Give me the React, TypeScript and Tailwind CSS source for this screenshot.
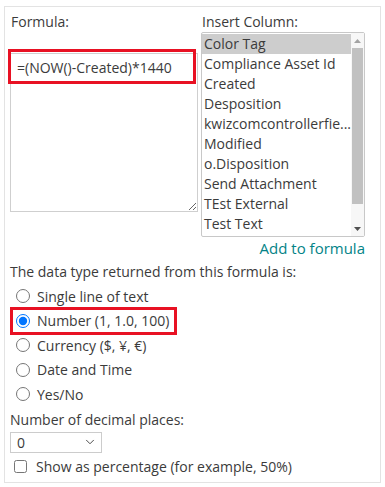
import { ChevronDown } from "lucide-react";

const columns = [
  "Color Tag",
  "Compliance Asset Id",
  "Created",
  "Desposition",
  "kwizcomcontrollerfie...",
  "Modified",
  "o.Disposition",
  "Send Attachment",
  "TEst External",
  "Test Text",
];

const types = [
  "Single line of text",
  "Number (1, 1.0, 100)",
  "Currency ($, ¥, €)",
  "Date and Time",
  "Yes/No",
];

const App = () => {
  return (
    <div className="w-[385px] h-[487px] bg-white pt-[6px] pl-[4px] font-['Open_Sans',sans-serif] text-[14px] text-[#3b3b3b]">
      <div className="relative w-[377px] h-[477px] border border-[#e3e3e3] pl-[5px] pr-[16px]">
        {/* Formula + columns */}
        <div className="flex gap-[3px]">
          <div className="w-[188px]">
            <div className="pl-[1px] pt-[5px] leading-[20px]">Formula:</div>
            <textarea
              readOnly
              value="=(NOW()-Created)*1440"
              className="mt-[21px] block w-[188px] h-[159px] border border-[#cfcfcf] px-[6px] pt-[4px] leading-[20px] outline-none resize"
            />
          </div>
          <div className="w-[164px]">
            <div className="pl-[1px] pt-[5px] leading-[20px]">Insert Column:</div>
            <div className="flex h-[205px] border border-[#c8c8c8] rounded-[2px]">
              <ul className="flex-1 py-[1px]">
                {columns.map((c, i) => (
                  <li
                    key={c}
                    className={`h-[20px] leading-[20px] pl-[2px] whitespace-nowrap ${i === 0 ? "bg-[#cdcdcd]" : ""}`}
                  >
                    {c}
                  </li>
                ))}
              </ul>
              <div className="w-[15px] flex flex-col bg-[#f7f7f7]">
                <div className="h-[15px] flex items-center justify-center">
                  <svg width="7" height="4" viewBox="0 0 7 4"><path d="M0 4 L3.5 0 L7 4 Z" fill="#a3a3a3" /></svg>
                </div>
                <div className="mx-[1px] h-[156px] bg-[#c1c1c1]" />
                <div className="flex-1" />
                <div className="h-[15px] flex items-center justify-center">
                  <svg width="7" height="4" viewBox="0 0 7 4"><path d="M0 0 L3.5 4 L7 0 Z" fill="#505050" /></svg>
                </div>
              </div>
            </div>
            <div className="mt-[1px] text-right text-[#038387] text-[15px] leading-[20px]">Add to formula</div>
          </div>
        </div>

        {/* Data type */}
        <div className="mt-[4px] leading-[20px]">The data type returned from this formula is:</div>
        <div className="mt-[2px]">
          {types.map((t, i) => (
            <label key={t} className="flex items-center gap-[7px] h-[24.5px] pl-[6px]">
              <input
                type="radio"
                name="dtype"
                defaultChecked={i === 1}
                className="m-0 w-[14px] h-[14px]"
              />
              <span>{t}</span>
            </label>
          ))}
        </div>

        {/* Decimal places */}
        <div className="mt-[3px] leading-[20px]">Number of decimal places:</div>
        <div className="mt-[2px] flex items-center justify-between w-[92px] h-[21px] border border-[#cccccc] pl-[6px] pr-[4px]">
          <span>0</span>
          <ChevronDown size={14} strokeWidth={1.5} className="text-[#333]" />
        </div>
        <label className="mt-[4px] flex items-center gap-[9px] pl-[4px] leading-[20px]">
          <input type="checkbox" className="m-0 w-[13px] h-[13px]" />
          <span>Show as percentage (for example, 50%)</span>
        </label>

        {/* annotation highlights */}
        <div className="absolute left-[3px] top-[42px] w-[188px] h-[35px] border-[3px] border-[#e81123]" />
        <div className="absolute left-[5px] top-[300px] w-[167px] h-[28px] border-[3px] border-[#e81123]" />
      </div>
    </div>
  );
};

export default App;
